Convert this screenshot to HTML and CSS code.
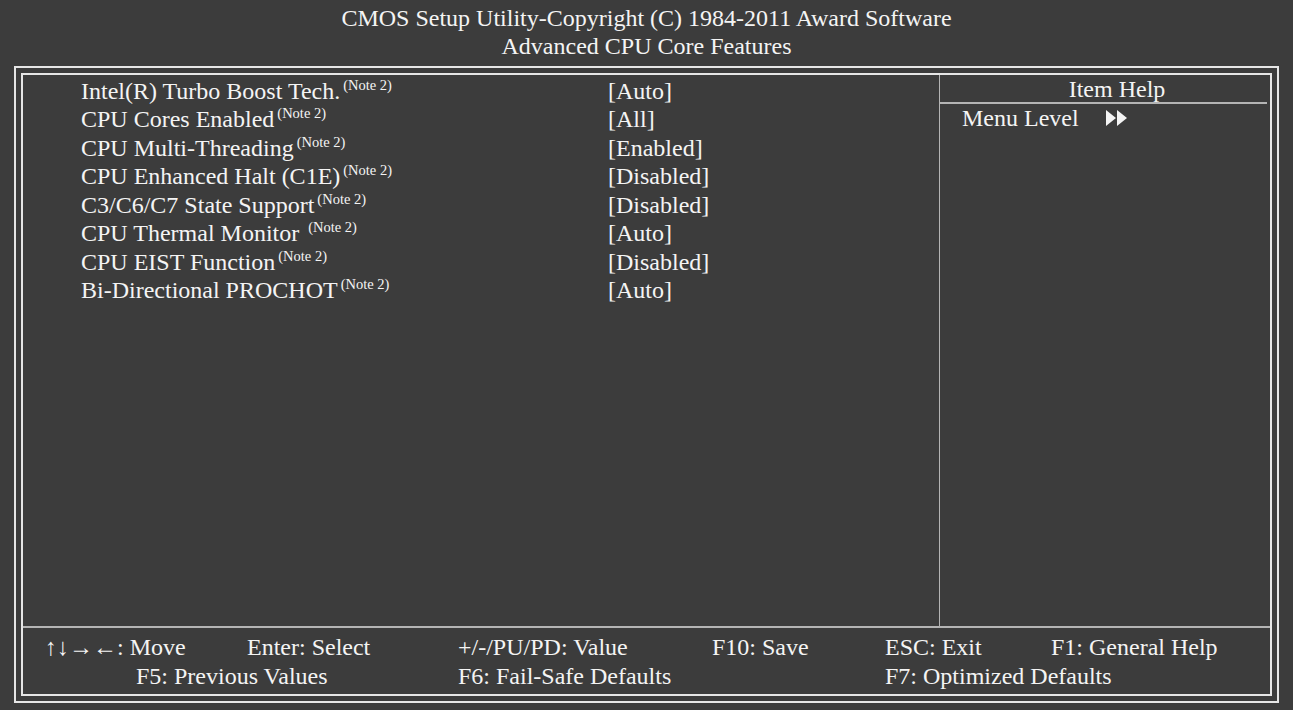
FILE: index.html
```html
<!DOCTYPE html>
<html lang="en">
<head>
  <meta charset="UTF-8">
  <title>CMOS Setup Utility - Advanced CPU Core Features</title>
  <link rel="stylesheet" href="styles.css">
</head>
<body>
  <div class="header">
    <div>CMOS Setup Utility-Copyright (C) 1984-2011 Award Software</div>
    <div>Advanced CPU Core Features</div>
  </div>

  <div class="frame">
    <div class="inner">
      <div class="main">
        <!-- Settings list -->
        <div class="settings">
          <div class="row"><span class="name">Intel(R) Turbo Boost Tech.<sup>(Note 2)</sup></span><span class="value">[Auto]</span></div>
          <div class="row"><span class="name">CPU Cores Enabled<sup>(Note 2)</sup></span><span class="value">[All]</span></div>
          <div class="row"><span class="name">CPU Multi-Threading<sup>(Note 2)</sup></span><span class="value">[Enabled]</span></div>
          <div class="row"><span class="name">CPU Enhanced Halt (C1E)<sup>(Note 2)</sup></span><span class="value">[Disabled]</span></div>
          <div class="row"><span class="name">C3/C6/C7 State Support<sup>(Note 2)</sup></span><span class="value">[Disabled]</span></div>
          <div class="row"><span class="name">CPU Thermal Monitor <sup>(Note 2)</sup></span><span class="value">[Auto]</span></div>
          <div class="row"><span class="name">CPU EIST Function<sup>(Note 2)</sup></span><span class="value">[Disabled]</span></div>
          <div class="row"><span class="name">Bi-Directional PROCHOT<sup>(Note 2)</sup></span><span class="value">[Auto]</span></div>
        </div>

        <!-- Item help panel -->
        <div class="help">
          <div class="help-title">Item Help</div>
          <div class="help-body">
            <span>Menu Level</span>
            <svg class="arrows" width="22" height="16" viewBox="0 0 22 16">
              <polygon points="0,0 10,8 0,16" fill="#f4f4f4"/>
              <polygon points="11,0 21,8 11,16" fill="#f4f4f4"/>
            </svg>
          </div>
        </div>
      </div>

      <!-- Key legend -->
      <div class="footer">
        <div class="keys keys-1">
          <span class="k1">↑↓→←: Move</span>
          <span class="k2">Enter: Select</span>
          <span class="k3">+/-/PU/PD: Value</span>
          <span class="k4">F10: Save</span>
          <span class="k5">ESC: Exit</span>
          <span>F1: General Help</span>
        </div>
        <div class="keys keys-2">
          <span class="k6">F5: Previous Values</span>
          <span class="k7">F6: Fail-Safe Defaults</span>
          <span>F7: Optimized Defaults</span>
        </div>
      </div>
    </div>
  </div>
</body>
</html>
```

FILE: styles.css
```css
body {
  margin: 0;
  width: 1293px;
  height: 710px;
  background-color: #3c3c3c;
  color: #f4f4f4;
  font-family: "Liberation Serif", "Times New Roman", serif;
  font-size: 24px;
  overflow: hidden;
}

.header {
  text-align: center;
  line-height: 28px;
  padding-top: 4px;
  height: 66px;
  box-sizing: border-box;
}

.frame {
  margin-left: 14px;
  width: 1265px;
  height: 637px;
  box-sizing: border-box;
  border: 2px solid #e6e6e6;
  padding: 5px;
}

.inner {
  height: 100%;
  box-sizing: border-box;
  border: 2px solid #e6e6e6;
  display: flex;
  flex-direction: column;
}

.main {
  display: flex;
  height: 551px;
  border-bottom: 2px solid #b4b4b4;
}

.settings {
  width: 917px;
  padding-top: 2px;
  padding-left: 58px;
  box-sizing: border-box;
  border-right: 1px solid #b4b4b4;
}

.row {
  display: flex;
  line-height: 28.43px;
}

.name {
  width: 527px;
  flex-shrink: 0;
}

sup {
  font-size: 14.5px;
  vertical-align: 9px;
  line-height: 0;
  margin-left: 3px;
}

.help {
  flex: 1;
  padding-right: 3px;
}

.help-title {
  text-align: center;
  padding-left: 27px;
  height: 27px;
  line-height: 28px;
  border-bottom: 2px solid #b4b4b4;
}

.help-body {
  display: flex;
  align-items: center;
  padding-left: 22px;
  line-height: 28px;
}

.arrows {
  margin-left: 27px;
}

.footer {
  padding-top: 5px;
}

.keys {
  display: flex;
  line-height: 28.5px;
  white-space: nowrap;
}

.keys-1 {
  padding-left: 22px;
}

.keys-2 {
  padding-left: 113px;
}

.k1 { width: 202px; }
.k2 { width: 211px; }
.k3 { width: 254px; }
.k4 { width: 173px; }
.k5 { width: 166px; }
.k6 { width: 322px; }
.k7 { width: 427px; }
```
